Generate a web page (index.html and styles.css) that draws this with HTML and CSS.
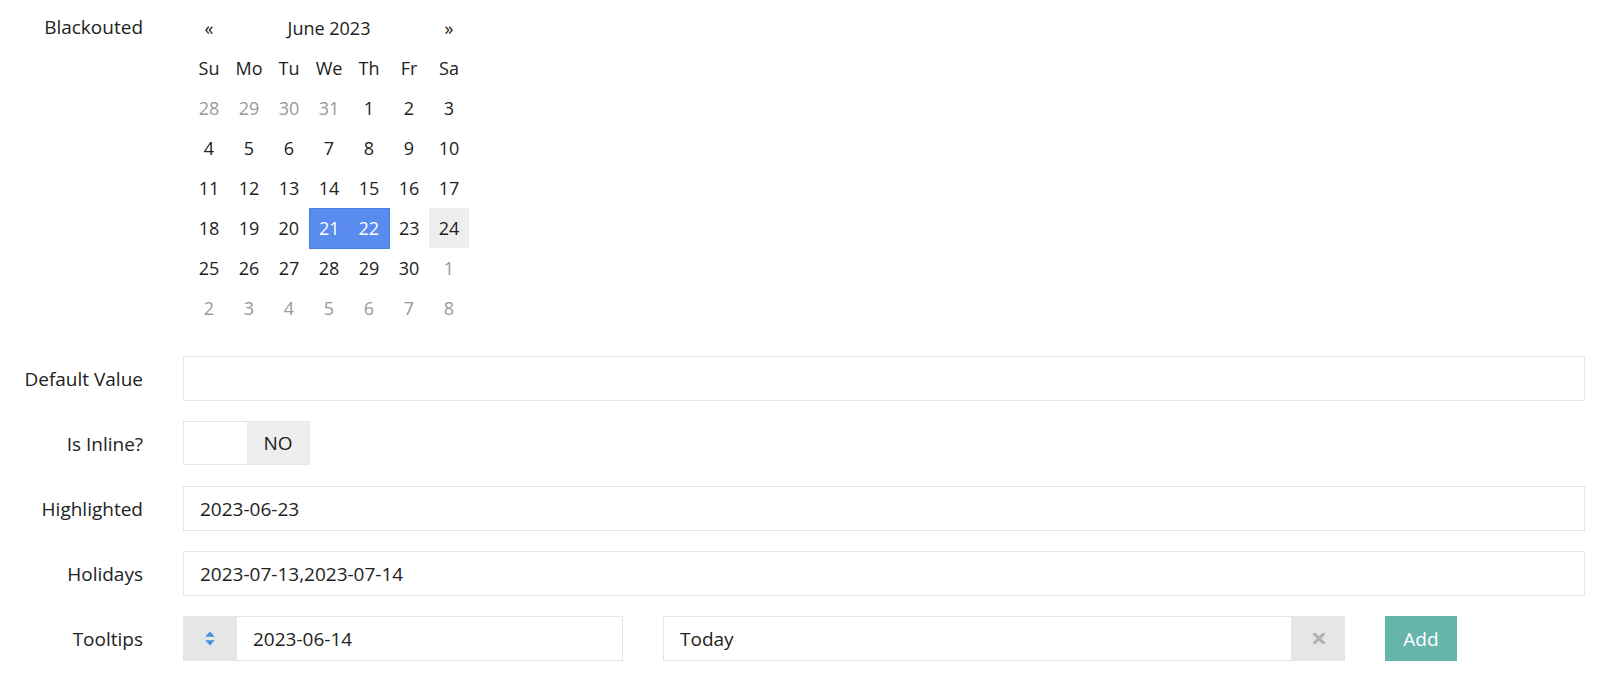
FILE: index.html
```html
<!DOCTYPE html>
<html>
<head>
<meta charset="utf-8">
<link rel="stylesheet" href="styles.css">
</head>
<body>
<form class="form">
  <div class="label label-top">Blackouted</div>
  <div class="datepicker">
    <table class="cal">
      <thead>
        <tr class="cal-head">
          <th class="nav">«</th>
          <th colspan="5" class="month">June 2023</th>
          <th class="nav">»</th>
        </tr>
        <tr class="dow">
          <th>Su</th><th>Mo</th><th>Tu</th><th>We</th><th>Th</th><th>Fr</th><th>Sa</th>
        </tr>
      </thead>
      <tbody>
        <tr><td class="old">28</td><td class="old">29</td><td class="old">30</td><td class="old">31</td><td>1</td><td>2</td><td>3</td></tr>
        <tr><td>4</td><td>5</td><td>6</td><td>7</td><td>8</td><td>9</td><td>10</td></tr>
        <tr><td>11</td><td>12</td><td>13</td><td>14</td><td>15</td><td>16</td><td>17</td></tr>
        <tr><td>18</td><td>19</td><td>20</td><td class="active range-start">21</td><td class="active range-end">22</td><td>23</td><td class="today">24</td></tr>
        <tr><td>25</td><td>26</td><td>27</td><td>28</td><td>29</td><td>30</td><td class="old">1</td></tr>
        <tr><td class="old">2</td><td class="old">3</td><td class="old">4</td><td class="old">5</td><td class="old">6</td><td class="old">7</td><td class="old">8</td></tr>
      </tbody>
    </table>
  </div>

  <div class="label">Default Value</div>
  <div class="field"><input class="input" type="text" value=""></div>

  <div class="label">Is Inline?</div>
  <div class="field">
    <div class="switch">
      <span class="switch-blank"></span>
      <span class="switch-off">NO</span>
    </div>
  </div>

  <div class="label">Highlighted</div>
  <div class="field"><input class="input" type="text" value="2023-06-23"></div>

  <div class="label">Holidays</div>
  <div class="field"><input class="input" type="text" value="2023-07-13,2023-07-14"></div>

  <div class="label">Tooltips</div>
  <div class="field tooltips">
    <div class="group">
      <span class="addon">
        <svg width="10" height="15" viewBox="0 0 10 15"><path d="M5 0.5 L9.7 5.8 L0.3 5.8 Z M5 14.5 L9.7 9.2 L0.3 9.2 Z" fill="#4a90e2"/></svg>
      </span>
      <input class="input group-input" type="text" value="2023-06-14">
    </div>
    <div class="group">
      <input class="input group-input" type="text" value="Today">
      <span class="addon addon-x">
        <svg width="12" height="11" viewBox="0 0 12 11"><path d="M1.5 1.2 L10.5 9.8 M10.5 1.2 L1.5 9.8" stroke="#b3b3b3" stroke-width="3.2" stroke-linecap="round"/></svg>
      </span>
    </div>
    <div class="btn-cell"><button type="button" class="btn-add">Add</button></div>
  </div>
</form>
</body>
</html>
```

FILE: styles.css
```css
* { box-sizing: border-box; }

body {
  margin: 0;
  background: #fff;
  font-family: "Open Sans", "Liberation Sans", sans-serif;
  font-size: 19px;
  color: #222;
}

.form {
  display: grid;
  grid-template-columns: 143px 1fr;
  column-gap: 40px;
  row-gap: 20px;
  padding-right: 15px;
}

.label {
  height: 45px;
  display: flex;
  align-items: center;
  justify-content: flex-end;
  line-height: 24px;
  color: #222;
}

.label-top {
  height: 40px;
  margin-top: 7px;
}

.datepicker {
  padding: 8px 0 8px 6px;
}

.cal {
  border-collapse: collapse;
  border-spacing: 0;
}

.cal th,
.cal td {
  width: 40px;
  height: 40px;
  padding: 0;
  text-align: center;
  font-weight: 400;
  font-size: 18px;
  color: #222;
  line-height: 24px;
}

.cal .month { width: 200px; }

.cal td.old { color: #999; }

.cal td.active {
  background: #5a8bef;
  color: #fff;
  border-top: 1px solid #4a7fe6;
  border-bottom: 1px solid #4a7fe6;
}
.cal td.range-start { border-left: 1px solid #4a7fe6; }
.cal td.range-end { border-right: 1px solid #4a7fe6; }

.cal td.today { background: #eee; }

.field { min-width: 0; }

.input {
  display: block;
  width: 100%;
  height: 45px;
  border: 1px solid #e6e6e6;
  padding: 0 16px;
  font-family: inherit;
  font-size: 19px;
  color: #222;
  background: #fff;
  outline: none;
  border-radius: 0;
}

.switch {
  display: flex;
  width: 127px;
  height: 44px;
  border: 1px solid #e6e6e6;
}
.switch-blank {
  width: 63px;
  background: #fff;
}
.switch-off {
  flex: 1;
  background: #eee;
  display: flex;
  align-items: center;
  justify-content: center;
  color: #222;
}

.tooltips {
  display: grid;
  grid-template-columns: 440px 682px 1fr;
  column-gap: 40px;
}

.group {
  display: flex;
  height: 45px;
}

.addon {
  width: 53px;
  flex: none;
  background: #e6e6e6;
  display: flex;
  align-items: center;
  justify-content: center;
}

.group-input {
  flex: 1;
  min-width: 0;
  width: auto;
}

.btn-cell { display: flex; }

.btn-add {
  width: 72px;
  height: 45px;
  border: none;
  background: #65b5ab;
  color: #fff;
  font-family: inherit;
  font-size: 19px;
  padding: 0;
  border-radius: 0;
}
```
